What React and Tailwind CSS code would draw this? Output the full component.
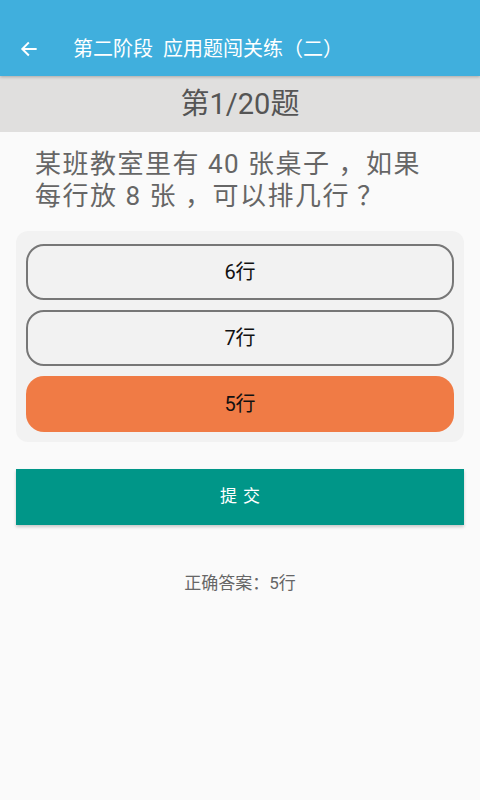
export default function App() {
  const options = [
    { label: "6行", selected: false },
    { label: "7行", selected: false },
    { label: "5行", selected: true },
  ];

  return (
    <div
      className="w-[480px] h-[800px] bg-[#fafafa] flex flex-col"
      style={{ fontFamily: 'Roboto, "Noto Sans CJK SC", "Noto Sans", sans-serif' }}
    >
      {/* App bar */}
      <div className="h-[76px] bg-[#40afdd] flex items-end pb-[14px] shadow-[0_1px_3px_rgba(0,0,0,0.25)] relative z-10">
        <div className="w-[56px] flex justify-center pl-[2px] pb-[3px]">
          <svg width="20" height="20" viewBox="0 0 24 24" fill="none" stroke="white" strokeWidth="2.4" strokeLinecap="square">
            <path d="M20 12H5" />
            <path d="M11 5l-7 7 7 7" />
          </svg>
        </div>
        <div className="ml-[17px] text-white text-[20px] leading-[26px]">第二阶段&nbsp;&nbsp;应用题闯关练（二）</div>
      </div>

      {/* Progress */}
      <div className="h-[56px] bg-[#e0dfde] flex items-center justify-center">
        <span className="text-[29px] text-[#555555] leading-none">第1/20题</span>
      </div>

      {/* Question */}
      <div className="px-[35px] pt-[16px] text-[26px] leading-[32px] tracking-[1.5px] text-[#666666] whitespace-nowrap">
        某班教室里有 40 张桌子 ，如果
        <br />
        每行放 8 张 ，可以排几行<span className="ml-[7px]">？</span>
      </div>

      {/* Options */}
      <div className="mx-[16px] mt-[19px] bg-[#f2f2f2] rounded-[12px] px-[10px] pt-[13px] pb-[10px] flex flex-col gap-[10px]">
        {options.map((o, i) => (
          <div
            key={i}
            className={
              o.selected
                ? "h-[56px] rounded-[18px] bg-[#f07b45] flex items-center justify-center text-[20px] text-[#111]"
                : "h-[56px] rounded-[18px] border-2 border-[#777777] bg-[#f2f2f2] flex items-center justify-center text-[20px] text-[#111]"
            }
          >
            {o.label}
          </div>
        ))}
      </div>

      {/* Submit */}
      <button className="mx-[16px] mt-[27px] h-[56px] bg-[#009688] text-white text-[17px] tracking-[6px] shadow-[0_2px_3px_rgba(0,0,0,0.2)] flex items-center justify-center pl-[6px]">
        提交
      </button>

      <div className="mt-[46px] text-center text-[17px] text-[#666666]">正确答案：5行</div>
    </div>
  );
}
